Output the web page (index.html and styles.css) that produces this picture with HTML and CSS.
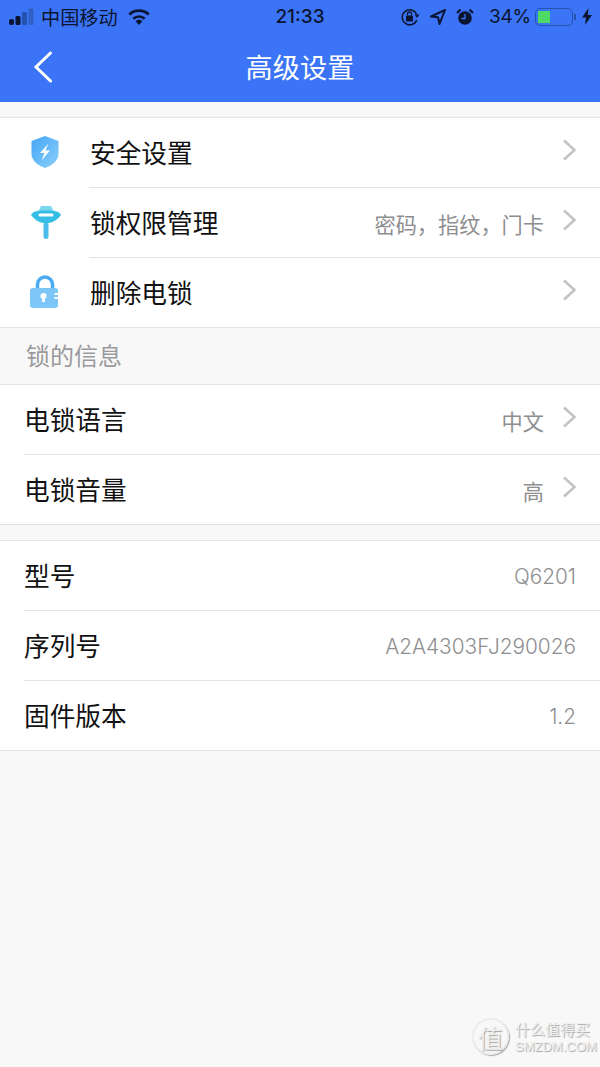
FILE: index.html
```html
<!DOCTYPE html>
<html lang="zh-CN">
<head>
<meta charset="utf-8">
<title>高级设置</title>
<link rel="stylesheet" href="styles.css">
</head>
<body>
<div class="phone">
  <header class="top">
    <div class="status">
      <div class="status-left">
        <svg class="signal" width="28" height="18" viewBox="0 0 28 18"><rect x="0" y="11" width="5" height="6" rx="2" fill="#0b1430"/><rect x="6.500" y="8" width="5" height="9" rx="1.500" fill="#0b1430"/><rect x="13" y="4" width="5" height="13" rx="1.500" fill="#2453ad"/><rect x="19.500" y="0.500" width="5" height="16.500" rx="1.500" fill="#2f60c2"/></svg>
        <span class="carrier">中国移动</span>
        <svg class="wifi" width="24" height="18" viewBox="0 0 24 18"><path d="M12 17 8.600 13.200a5 5 0 0 1 6.800 0Z" fill="#0b1430"/><path d="M6.300 10.700a8.400 8.400 0 0 1 11.400 0" fill="none" stroke="#0b1430" stroke-width="2.600"/><path d="M2.300 6.500a14.300 14.300 0 0 1 19.400 0" fill="none" stroke="#0b1430" stroke-width="2.800"/></svg>
      </div>
      <div class="time">21:33</div>
      <div class="status-right">
        <svg width="20" height="20" viewBox="0 0 20 20"><path d="M16.500 7A7.500 7.500 0 1 0 16.800 13" fill="none" stroke="#0b1430" stroke-width="1.500"/><path d="M14.500 7.500h5L17 11Z" fill="#0b1430"/><rect x="6" y="8.500" width="7" height="6" rx="1" fill="#0b1430"/><path d="M7.500 8.500V7a2 2 0 0 1 4 0v1.500" fill="none" stroke="#0b1430" stroke-width="1.300"/></svg>
        <svg class="gap-loc" width="16" height="16" viewBox="0 0 16 16"><path d="M15 1 1 7.500 8 8.300 9.500 15Z" fill="none" stroke="#0b1430" stroke-width="2" stroke-linejoin="round"/></svg>
        <svg class="gap-alarm" width="18" height="18" viewBox="0 0 18 18"><circle cx="9" cy="10" r="6.800" fill="#0b1430"/><path d="M9 6v4.500H5.500" fill="none" stroke="#3b74f6" stroke-width="1.300"/><path d="M1 5 4.500 1.500M17 5 13.500 1.500" stroke="#0b1430" stroke-width="2.200"/></svg>
        <span class="percent">34%</span>
        <div class="battery"><div class="battery-fill"></div></div>
        <div class="battery-cap"></div>
        <svg class="bolt" width="10" height="17" viewBox="0 0 10 17"><path d="M6.500 0 0 9.500h4L3 17l7-10H5.800Z" fill="#0b1430"/></svg>
      </div>
    </div>
    <nav class="nav">
      <svg class="back" width="20" height="32" viewBox="0 0 20 32"><path d="M17.500 2 3 16l14.500 14" fill="none" stroke="#fff" stroke-width="3" stroke-linecap="round"/></svg>
      <h1 class="title">高级设置</h1>
    </nav>
  </header>

  <section class="group first">
    <div class="row icon-row">
      <svg class="row-icon" width="30" height="34" viewBox="0 0 30 34"><defs><linearGradient id="s" x1="0" y1="0" x2="1" y2="1"><stop offset="0" stop-color="#42a5f5"/><stop offset="1" stop-color="#8fd0fb"/></linearGradient></defs><path d="M15 1 28.500 6V19C28.500 26 21 31 15 33 9 31 1.500 26 1.500 19V6Z" fill="url(#s)"/><path d="M18.500 8.500 10 18h4.500l-3 7.500 8.500-10h-4.700Z" fill="#fff"/></svg>
      <div class="row-body"><span class="label">安全设置</span><svg class="chev" width="15" height="22" viewBox="0 0 15 22"><path d="M2 1.500 12.500 11 2 20.500" fill="none" stroke="#c2c2c4" stroke-width="2.500"/></svg></div>
    </div>
    <div class="row icon-row">
      <svg class="row-icon" width="32" height="34" viewBox="0 0 32 34"><path d="M11 1h10l3 6H8Z" fill="#7ad6ee"/><path d="M1 10C3 6 8 5.500 16 5.500S29 6 31 10C28 14 24 17 19 18H13C8 17 4 14 1 10Z" fill="#35bde6"/><rect x="8.500" y="8.500" width="15" height="3" rx="1.500" fill="#fff"/><rect x="13.500" y="17" width="5" height="17" rx="2.500" fill="#4bbdea"/></svg>
      <div class="row-body"><span class="label">锁权限管理</span><span class="value">密码，指纹，门卡</span><svg class="chev" width="15" height="22" viewBox="0 0 15 22"><path d="M2 1.500 12.500 11 2 20.500" fill="none" stroke="#c2c2c4" stroke-width="2.500"/></svg></div>
    </div>
    <div class="row icon-row">
      <svg class="row-icon" width="30" height="34" viewBox="0 0 30 34"><path d="M7.500 15V9.500a7.500 7.500 0 0 1 15 0V15" fill="none" stroke="#4aabf3" stroke-width="3.500"/><path d="M3 13H25a3 3 0 0 1 3 3v2h-3.500v2H28v2h-3.500v2H28v6a3 3 0 0 1-3 3H3a3 3 0 0 1-3-3V16a3 3 0 0 1 3-3Z" fill="#7cc7f8"/><circle cx="13.500" cy="21" r="3" fill="#fff"/><path d="M12.500 23h2l.5 4h-3Z" fill="#fff"/></svg>
      <div class="row-body"><span class="label">删除电锁</span><svg class="chev" width="15" height="22" viewBox="0 0 15 22"><path d="M2 1.500 12.500 11 2 20.500" fill="none" stroke="#c2c2c4" stroke-width="2.500"/></svg></div>
    </div>
  </section>

  <div class="section-title">锁的信息</div>

  <section class="group">
    <div class="row plain-row">
      <div class="row-body"><span class="label">电锁语言</span><span class="value">中文</span><svg class="chev" width="15" height="22" viewBox="0 0 15 22"><path d="M2 1.500 12.500 11 2 20.500" fill="none" stroke="#c2c2c4" stroke-width="2.500"/></svg></div>
    </div>
    <div class="row plain-row">
      <div class="row-body"><span class="label">电锁音量</span><span class="value">高</span><svg class="chev" width="15" height="22" viewBox="0 0 15 22"><path d="M2 1.500 12.500 11 2 20.500" fill="none" stroke="#c2c2c4" stroke-width="2.500"/></svg></div>
    </div>
  </section>

  <section class="group spaced">
    <div class="row plain-row"><div class="row-body info"><span class="label">型号</span><span class="value">Q6201</span></div></div>
    <div class="row plain-row"><div class="row-body info"><span class="label">序列号</span><span class="value">A2A4303FJ290026</span></div></div>
    <div class="row plain-row"><div class="row-body info"><span class="label">固件版本</span><span class="value">1.2</span></div></div>
  </section>

  <div class="watermark">
    <div class="wm-logo"><span>值</span></div>
    <div class="wm-text"><div class="wm-cn">什么值得买</div><div class="wm-en">SMZDM.COM</div></div>
  </div>
</div>
</body>
</html>
```
FILE: styles.css
```css
* { box-sizing: border-box; }
html, body { margin: 0; padding: 0; }
body { font-family: "Noto Sans CJK SC", "Noto Sans", sans-serif; background: #f8f8f8; }
.phone { width: 600px; height: 1067px; position: relative; overflow: hidden; background: #f8f8f8; }

.top { background: #3b74f6; height: 102px; }
.status { height: 33px; display: flex; align-items: center; justify-content: space-between; padding: 0 8px 0 9px; position: relative; color: #0b1430; }
.status-left { display: flex; align-items: center; }
.signal { margin-right: 4px; }
.carrier { font-size: 19.200px; line-height: 24px; }
.wifi { margin-left: 9px; }
.time { position: absolute; left: 0; right: 0; text-align: center; font: 500 19px/24px Inter, sans-serif; }
.status-right { display: flex; align-items: center; }
.gap-loc { margin-left: 10px; }
.gap-alarm { margin-left: 10px; }
.percent { font: 400 19px/24px Inter, sans-serif; margin-left: 15px; letter-spacing: -.2px; }
.battery { width: 38px; height: 18px; border: 1.500px solid #2453ad; border-radius: 5px; margin-left: 4px; padding: 2px; }
.battery-fill { width: 12px; height: 100%; background: #4cd964; }
.battery-cap { width: 2px; height: 6px; background: #2453ad; margin-left: 1px; }
.bolt { margin-left: 6px; }

.nav { height: 69px; display: flex; align-items: center; justify-content: center; position: relative; }
.back { position: absolute; left: 33px; top: 18px; }
.title { margin: 0; font-size: 27.200px; font-weight: 400; color: #fff; line-height: 36px; position: relative; top: -2px; }

.group { background: #fff; border-top: 1px solid #e2e2e2; border-bottom: 1px solid #e2e2e2; }
.group.first { margin-top: 15px; }
.group.spaced { margin-top: 15px; }

.row { display: flex; align-items: center; height: 70px; }
.row:last-child { height: 69px; }
.row-icon { flex: none; position: absolute; left: 30px; top: 17px; }
.icon-row { position: relative; padding-left: 89px; }
.icon-row .label { margin-left: 1px; }
.plain-row { padding-left: 24px; }
.row-body { flex: 1; height: 100%; display: flex; align-items: center; padding-right: 23px; padding-bottom: 1px; border-bottom: 1px solid #e5e5e5; min-width: 0; }
.row:last-child .row-body { border-bottom: 0; }
.label { font-size: 25.700px; line-height: 34px; color: #111; }
.value { margin-left: auto; font-size: 21.200px; line-height: 28px; color: #8e8e90; position: relative; top: 2px; }
.chev { flex: none; margin-left: 18px; position: relative; top: -2px; }
.label + .chev { margin-left: auto; }
.row-body.info { padding-right: 24px; }
.info .value { top: 2px; font-family: Inter, sans-serif; font-size: 20.800px; font-weight: 300; }

.section-title { height: 56px; padding-left: 26px; padding-bottom: 3px; display: flex; align-items: center; font-size: 24px; color: #9a9a9c; }

.watermark { position: absolute; left: 472px; top: 1018px; display: flex; align-items: center; gap: 6px; color: #efefef; text-shadow: 1px 1px 1px #a5a5a5; }
.wm-logo { width: 37px; height: 37px; border: 2px solid #ececec; border-radius: 50%; box-shadow: 1px 1px 1px #a5a5a5; display: flex; align-items: center; justify-content: center; font-size: 25px; }
.wm-logo span { line-height: 30px; }
.wm-cn { font-size: 15px; line-height: 20px; }
.wm-en { font: 400 13px/16px "Liberation Sans", sans-serif; }
```
